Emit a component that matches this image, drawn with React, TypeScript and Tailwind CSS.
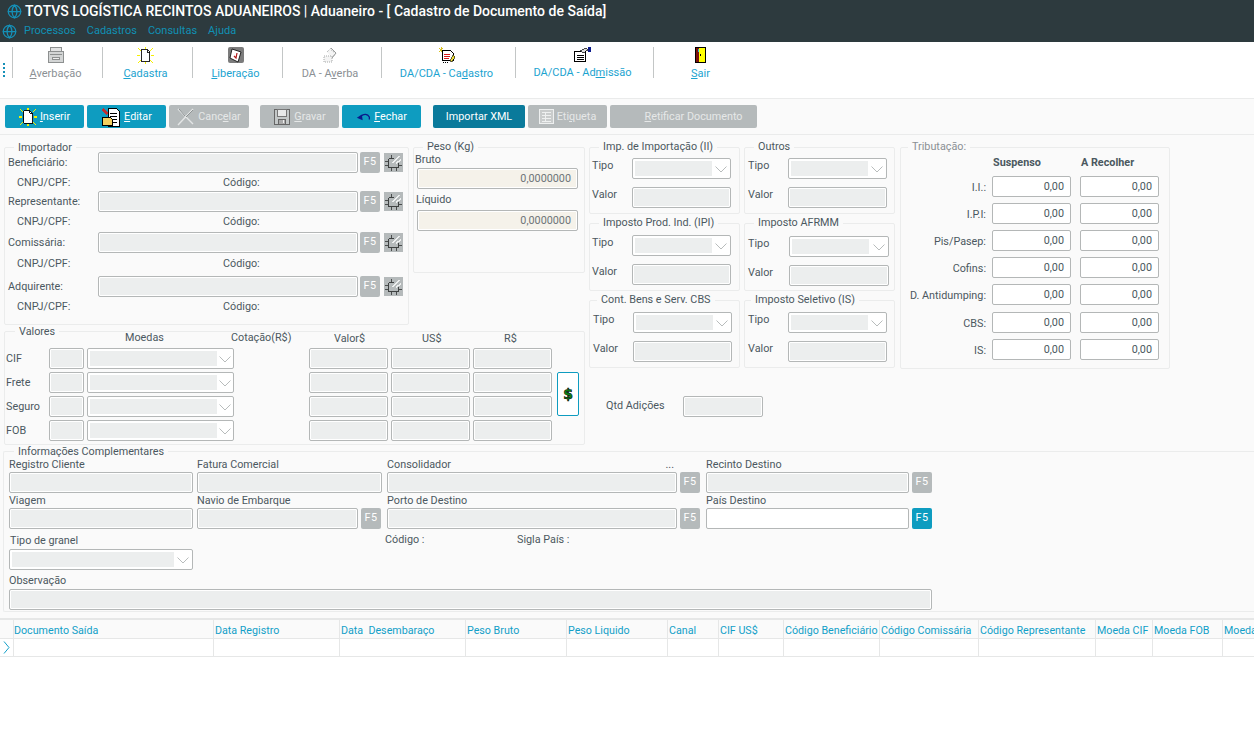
import type { ReactNode } from "react";
import { Globe } from "lucide-react";

function SparkPage({ size = 20 }: { size?: number }) {
  return (
    <svg width={size} height={size} viewBox="0 0 20 20" shapeRendering="crispEdges">
      <path d="M1 1l4 4M19 1l-4 4M1 19l4-4M19 19l-4-4M0 10h3M17 10h3M10 0v2M10 18v2" stroke="#f6f000" strokeWidth="1.5" fill="none" />
      <path d="M5 3h7l3 3v11H5z" fill="#fff" stroke="#000" />
      <path d="M12 3v3h3" fill="none" stroke="#000" />
    </svg>
  );
}

function EditIcon() {
  return (
    <svg width="20" height="20" viewBox="0 0 20 20" shapeRendering="crispEdges">
      <path d="M7 1h8l3 3v15H7z" fill="#fff" stroke="#000" />
      <path d="M9 6h7M9 9h7M10 12h6M10 15h6" stroke="#000" />
      <path d="M1 10h8l2 2v6H1z" fill="#f2d060" stroke="#000" />
      <path d="M2 1l5 5-2 2-5-5z" fill="#c03030" />
    </svg>
  );
}

function CrossIcon() {
  return (
    <svg width="18" height="18" viewBox="0 0 18 18">
      <path d="M1 1l15 15M16 1L1 17" stroke="#e4e6e6" strokeWidth="1.4" fill="none" />
      <path d="M2 1l6 7M16 2l-7 7" stroke="#8d9293" strokeWidth="1" fill="none" />
    </svg>
  );
}

function FloppyIcon() {
  return (
    <svg width="18" height="18" viewBox="0 0 18 18" shapeRendering="crispEdges">
      <path d="M1.500 1.500h15v15h-15z" fill="#c4c8c8" stroke="#666" />
      <path d="M4.500 1.500h9v7h-9z" fill="#e8e9e9" stroke="#777" />
      <path d="M5.500 11.500h7v5h-7z" fill="#aaa" stroke="#666" />
      <path d="M10 12v3" stroke="#eee" />
    </svg>
  );
}

function UndoIcon() {
  return (
    <svg width="15" height="10" viewBox="0 0 18 12">
      <path d="M6 5c3-3 8-3 10 1v3" stroke="#0a1a8c" strokeWidth="1.500" fill="none" />
      <path d="M1 7l7 3-1-7z" fill="#0a1a8c" />
    </svg>
  );
}

function GridIcon() {
  return (
    <svg width="15" height="15" viewBox="0 0 15 15" shapeRendering="crispEdges">
      <path d="M.5.5h14v14H.5z" fill="#c9cccc" stroke="#eef0f0" />
      <path d="M3 3h9M3 6h9M3 9h9M3 12h9M6 3v9" stroke="#eef0f0" />
    </svg>
  );
}

function ChipIcon() {
  return (
    <div className="w-[19px] h-[19px] bg-[#b5babb] flex items-center justify-center shrink-0">
      <svg width="17" height="17" viewBox="0 0 17 17" shapeRendering="crispEdges">
        <path d="M3.500 4.500v9h10v-5M3.500 4.500h5" fill="none" stroke="#3f4242" />
        <path d="M0 7h3M0 11h3M14 11h3M6 1v3M6 14v3M11 14v3" stroke="#4a4d4d" />
        <path d="M8 9l6-7M11 9l5-3" stroke="#eef0f0" strokeWidth="1.500" />
      </svg>
    </div>
  );
}

function Chevron() {
  return (
    <svg width="12" height="7" viewBox="0 0 12 7" className="shrink-0">
      <path d="M.5.5L6 6 11.500.5" stroke="#b8bcbc" fill="none" />
    </svg>
  );
}

function ToolAverbacao() {
  return (
    <svg width="18" height="18" viewBox="0 0 18 18" shapeRendering="crispEdges">
      <path d="M3.500 1.500h11v4h-11z" fill="#e2e3e3" stroke="#8d9090" />
      <path d="M1.500 5.500h15v11h-15z" fill="#d3d5d5" stroke="#8d9090" />
      <path d="M3 8.500h12M5.500 11.500h7v2h-7z" fill="#eee" stroke="#8d9090" />
    </svg>
  );
}

function ToolLiberacao() {
  return (
    <svg width="16" height="16" viewBox="0 0 16 16">
      <rect width="16" height="16" rx="2" fill="#7c7c7c" />
      <path d="M4 2l9 3-3 10-8-4z" fill="#fff" stroke="#000" strokeWidth=".8" />
      <path d="M6 9l2 2 1-5" stroke="#b01818" strokeWidth="1.200" fill="none" />
    </svg>
  );
}

function ToolAverba() {
  return (
    <svg width="14" height="16" viewBox="0 0 14 16">
      <path d="M1 9h8v6H1zM4 5l4-4 1 3 4 2-4 5" fill="#f4f4f4" stroke="#a6a9a9" strokeDasharray="1 1" />
      <path d="M8 1l5 5-4 5" fill="none" stroke="#9a9d9d" />
    </svg>
  );
}

function ToolDaCadastro() {
  return (
    <svg width="18" height="17" viewBox="0 0 18 17" shapeRendering="crispEdges">
      <path d="M1 1l3 3M5 1L1 5M3 0v5" stroke="#d8c020" />
      <path d="M4.500 3.500h8l3 3v7h-11z" fill="#fff" stroke="#000" />
      <path d="M6 7h6M6 9h6M6 11h5" stroke="#d81818" />
      <path d="M15 8l2 2-3 5-2-1z" fill="#f0e040" stroke="#000" strokeWidth=".6" />
      <path d="M5 15h6" stroke="#000" strokeDasharray="1 1" />
    </svg>
  );
}

function ToolDaAdmissao() {
  return (
    <svg width="17" height="15" viewBox="0 0 17 15" shapeRendering="crispEdges">
      <path d="M.5 4.500h11v10H.500z" fill="#fff" stroke="#000" />
      <path d="M3 8h7M3 10h7M3 12h7" stroke="#000" />
      <path d="M6 4l6-3 2 2-5 3z" fill="#ddd" stroke="#000" strokeWidth=".7" />
      <path d="M14 0h3v5h-3z" fill="#0c1c8c" />
    </svg>
  );
}

function ToolSair() {
  return (
    <svg width="11" height="16" viewBox="0 0 11 16" shapeRendering="crispEdges">
      <path d="M0 0h11v16H0z" fill="#000" />
      <path d="M1 1h3v14H1z" fill="#7c1010" />
      <path d="M4 1h6v14H4z" fill="#ffff00" />
      <path d="M3 2l1 0v3H3z" fill="#20c0d0" />
      <path d="M5 7h1v2H5z" fill="#000" />
    </svg>
  );
}

function ToolItem({ width, label, icon, disabled }: { width: string; label: ReactNode; icon: ReactNode; disabled?: boolean }) {
  return (
    <div className={`h-[31px] border-l border-[#c3c6c6] flex flex-col items-center pr-[4px] shrink-0 ${width}`}>
      <div className="h-[16px] flex items-center justify-center">{icon}</div>
      <div className={`mt-[3px] h-[14px] leading-[16px] text-[11px] whitespace-nowrap ${disabled ? "text-[#8b9094]" : "text-[#1ba3d0]"}`}>{label}</div>
    </div>
  );
}

function ActionButton({ width, icon, children, disabled, dark, ml }: { width: string; icon?: ReactNode; children: ReactNode; disabled?: boolean; dark?: boolean; ml?: string }) {
  const bg = disabled ? "bg-[#b5babb] text-[#e6e8e8]" : dark ? "bg-[#0a7a9b] text-white" : "bg-[#0e9cc0] text-white";
  return (
    <div className={`h-[23px] rounded-[2px] flex items-center justify-center gap-[3px] shrink-0 ${bg} ${width} ${ml ?? ""}`}>
      {icon}
      <span className="whitespace-nowrap pt-[2px]">{children}</span>
    </div>
  );
}

function Group({ title, className, legend, raised, children }: { title: string; className?: string; legend?: string; raised?: boolean; children?: ReactNode }) {
  return (
    <div className={`relative border border-[#ebecec] rounded-[2px] shrink-0 ${className ?? ""}`}>
      <span className={`absolute h-[14px] leading-[14px] px-[4px] bg-[#fafafa] whitespace-nowrap ${raised ? "-top-[8px]" : "-top-[7px]"} ${legend ?? "left-[9px]"}`}>{title}</span>
      {children}
    </div>
  );
}

function Input({ width, value, tone = "off", className }: { width: string; value?: string; tone?: "off" | "sand" | "on"; className?: string }) {
  const bg = tone === "sand" ? "bg-[#f5f2ea] text-[#6e7478]" : tone === "on" ? "bg-white text-[#4b5860]" : "bg-[#eceeee]";
  return (
    <div className={`h-[21px] leading-[20px] border border-[#b4b7b7] rounded-[2px] text-right pr-[6px] shadow-[inset_0_0_0_1px_#fff] shrink-0 ${bg} ${width} ${className ?? ""}`}>
      {value}
    </div>
  );
}

function Select({ width, inner, className }: { width: string; inner: string; className?: string }) {
  return (
    <div className={`h-[21px] border border-[#b4b7b7] rounded-[2px] bg-white flex items-center pl-[2px] shrink-0 ${width} ${className ?? ""}`}>
      <div className={`h-[15px] bg-[#eceeee] ${inner}`} />
      <div className="flex-1 flex justify-center pt-[1px]">
        <Chevron />
      </div>
    </div>
  );
}

function F5({ active, className }: { active?: boolean; className?: string }) {
  return (
    <div className={`w-[20px] h-[21px] rounded-[2px] flex items-center justify-center text-white tracking-[0.5px] shrink-0 ${active ? "bg-[#0e9cc0]" : "bg-[#b5babb]"} ${className ?? ""}`}>
      F5
    </div>
  );
}

function PartyRow({ label, gap, top }: { label: string; gap: string; top?: string }) {
  return (
    <>
      <div className={`flex items-center pl-[3px] ${top ?? ""}`}>
        <span className="w-[90px] pt-[1px]">{label}</span>
        <Input width="w-[260px]" />
        <F5 className="ml-[2px]" />
        <div className="ml-[4px]">
          <ChipIcon />
        </div>
      </div>
      <div className={`flex items-center pl-[12px] ${gap}`}>
        <span className="w-[206px]">CNPJ/CPF:</span>
        <span>Código:</span>
      </div>
    </>
  );
}

function TaxBox({ title, legend, pad, sel, valor, left }: { title: string; legend: string; pad: string; sel?: string; valor?: string; left?: string }) {
  return (
    <Group title={title} legend={legend} className={pad} raised>
      <div className={`flex items-start ${left ?? "pl-[2px]"}`}>
        <span className="w-[40px] h-[15px] leading-[15px]">Tipo</span>
        <Select width={sel ?? "w-[99px]"} inner="w-[77px]" />
      </div>
      <div className={`flex items-start mt-[8px] ${left ?? "pl-[2px]"}`}>
        <span className="w-[40px] h-[15px] leading-[15px]">Valor</span>
        <Input width={valor ?? sel ?? "w-[99px]"} />
      </div>
    </Group>
  );
}

function TribRow({ label, className }: { label: string; className?: string }) {
  return (
    <div className={`flex items-center ${className ?? ""}`}>
      <span className="w-[85px] pt-[4px] text-right whitespace-nowrap">{label}</span>
      <Input width="w-[79px]" className="ml-[6px]" value="0,00" tone="on" />
      <Input width="w-[79px]" className="ml-[9px]" value="0,00" tone="on" />
    </div>
  );
}

function MoneyRow({ label }: { label: string }) {
  return (
    <div className="flex items-center pl-[1px]">
      <span className="w-[43px] pt-[2px]">{label}</span>
      <Input width="w-[35px]" />
      <Select width="w-[147px]" inner="w-[127px]" className="ml-[3px]" />
      <Input width="w-[79px]" className="ml-[75px]" />
      <Input width="w-[79px]" className="ml-[3px]" />
      <Input width="w-[79px]" className="ml-[3px]" />
    </div>
  );
}

function LabeledField({ label, width, children }: { label: ReactNode; width: string; children: ReactNode }) {
  return (
    <div className={`shrink-0 ${width}`}>
      <div className="h-[15px] leading-[15px] flex justify-between whitespace-nowrap">{label}</div>
      {children}
    </div>
  );
}

const gridColumns = [
  { w: "w-[200px] pl-0", t: "Documento Saída" },
  { w: "w-[126px] pl-[1px]", t: "Data Registro" },
  { w: "w-[126px] pl-[1px]", t: "Data  Desembaraço" },
  { w: "w-[101px] pl-[1px]", t: "Peso Bruto" },
  { w: "w-[101px] pl-[1px]", t: "Peso Liquido" },
  { w: "w-[51px] pl-[1px]", t: "Canal" },
  { w: "w-[65px] pl-[1px]", t: "CIF US$" },
  { w: "w-[96px] pl-[1px]", t: "Código Beneficiário" },
  { w: "w-[99px] pl-[1px]", t: "Código Comissária" },
  { w: "w-[117px] pl-[1px]", t: "Código Representante" },
  { w: "w-[57px] pl-[1px]", t: "Moeda CIF" },
  { w: "w-[70px] pl-[1px]", t: "Moeda FOB" },
  { w: "w-[60px] pl-[1px]", t: "Moeda" },
];

export default function App() {
  return (
    <div className="w-[1254px] h-[742px] overflow-hidden bg-white font-['Roboto',sans-serif] text-[10.8px] text-[#4b5860]">
      <header className="h-[42px] bg-[#2d3a3e]">
        <div className="h-[21px] flex items-center pl-[7px] pt-[1px]">
          <Globe size={15} className="text-[#1590b8]" />
          <span className="ml-[3px] text-[14px] font-medium text-white whitespace-nowrap">TOTVS LOGÍSTICA RECINTOS ADUANEIROS | Aduaneiro - [ Cadastro de Documento de Saída]</span>
        </div>
        <div className="h-[21px] flex items-center pl-[2px] text-[11px] text-[#1090b4]">
          <Globe size={15} className="text-[#1590b8]" />
          <span className="ml-[7px]">Processos</span>
          <span className="ml-[11px]">Cadastros</span>
          <span className="ml-[11px]">Consultas</span>
          <span className="ml-[11px]">Ajuda</span>
        </div>
      </header>

      <div className="h-[57px] bg-white border-b border-[#eaebeb] flex items-start pt-[5px]">
        <div className="w-[2px] h-[14px] mt-[16px] ml-[3px] mr-[7px] border-l-2 border-dotted border-[#1590b8]" />
        <ToolItem width="w-[90px]" disabled icon={<ToolAverbacao />} label={<><u>A</u>verbação</>} />
        <ToolItem width="w-[90px]" icon={<SparkPage size={17} />} label={<><u>C</u>adastra</>} />
        <ToolItem width="w-[90px]" icon={<ToolLiberacao />} label={<><u>L</u>iberação</>} />
        <ToolItem width="w-[99px]" disabled icon={<ToolAverba />} label={<>DA - A<u>v</u>erba</>} />
        <ToolItem width="w-[134px]" icon={<ToolDaCadastro />} label={<>DA/CDA - Ca<u>d</u>astro</>} />
        <ToolItem width="w-[138px]" icon={<ToolDaAdmissao />} label={<>DA/CDA - Ad<u>m</u>issão</>} />
        <ToolItem width="w-[98px]" icon={<ToolSair />} label={<><u>S</u>air</>} />
      </div>

      <div className="bg-[#fafafa] h-[701px]">
        <div className="h-[36px] border-b border-[#eaebeb] flex items-start pt-[6px] pl-[5px]">
          <ActionButton width="w-[79px]" icon={<SparkPage size={18} />}><u>I</u>nserir</ActionButton>
          <ActionButton width="w-[79px]" ml="ml-[3px]" icon={<EditIcon />}><u>E</u>ditar</ActionButton>
          <ActionButton width="w-[80px]" ml="ml-[3px]" disabled icon={<CrossIcon />}>Canc<u>e</u>lar</ActionButton>
          <ActionButton width="w-[79px]" ml="ml-[11px]" disabled icon={<FloppyIcon />}><u>G</u>ravar</ActionButton>
          <ActionButton width="w-[79px]" ml="ml-[3px]" icon={<UndoIcon />}><u>F</u>echar</ActionButton>
          <ActionButton width="w-[92px]" ml="ml-[12px]" dark>Importar XML</ActionButton>
          <ActionButton width="w-[79px]" ml="ml-[3px]" disabled icon={<GridIcon />}>Eti<u>q</u>ueta</ActionButton>
          <ActionButton width="w-[147px]" ml="ml-[3px]" disabled><span className="ml-[20px]"><u>R</u>etificar Documento</span></ActionButton>
        </div>

        <div className="flex items-start pl-[4px] pt-[12px]">
          <div className="w-[581px] shrink-0">
            <div className="flex items-start">
              <Group title="Importador" className="w-[405px] h-[178px] pt-[4px]">
                <PartyRow label="Beneficiário:" gap="h-[18px] pt-[2px]" />
                <PartyRow label="Representante:" gap="h-[20px] pt-[1px]" />
                <PartyRow label="Comissária:" gap="h-[23px]" />
                <PartyRow label="Adquirente:" gap="h-[20px] pt-[1px]" />
              </Group>
              <Group title="Peso (Kg)" className="w-[172px] h-[126px] ml-[4px] pl-[1px] pt-[3px]" raised>
                <div className="h-[15px] leading-[17px]">Bruto</div>
                <Input width="w-[161px]" tone="sand" className="ml-[2px] mt-[2px]" value="0,0000000" />
                <div className="h-[15px] leading-[17px] mt-[2px] ml-[1px]">Líquido</div>
                <Input width="w-[161px]" tone="sand" className="ml-[2px] mt-[4px]" value="0,0000000" />
              </Group>
            </div>

            <Group title="Valores" className="w-[581px] h-[114px] mt-[6px]" legend="left-[10px]">
              <div className="h-[16px] leading-[12px] flex items-start whitespace-nowrap">
                <span className="ml-[120px] w-[106px]">Moedas</span>
                <span className="w-[103px]">Cotação(R$)</span>
                <span className="w-[88px] pt-[1px]">Valor$</span>
                <span className="w-[82px] pt-[1px]">US$</span>
                <span className="pt-[1px]">R$</span>
              </div>
              <div className="flex items-start">
                <div className="flex flex-col gap-[3px]">
                  <MoneyRow label="CIF" />
                  <MoneyRow label="Frete" />
                  <MoneyRow label="Seguro" />
                  <MoneyRow label="FOB" />
                </div>
                <div className="ml-[5px] mt-[24px] w-[22px] h-[44px] border border-[#0e9cc0] rounded-[2px] bg-white flex items-center justify-center font-['DejaVu_Sans',sans-serif] text-[14px] font-bold text-[#0a8a14] [-webkit-text-stroke:0.6px_black]">
                  $
                </div>
              </div>
            </Group>
          </div>

          <div className="w-[307px] ml-[4px] shrink-0">
            <div className="grid grid-cols-[151px_151px] grid-rows-[67px_68px_68px] gap-x-[4px] gap-y-[9px]">
              <TaxBox title="Imp. de Importação (II)" legend="left-[9px]" pad="pt-[10px]" />
              <TaxBox title="Outros" legend="left-[9px]" pad="pt-[10px]" left="pl-[3px]" />
              <TaxBox title="Imposto Prod. Ind. (IPI)" legend="left-[9px]" pad="pt-[11px]" />
              <TaxBox title="Imposto AFRMM" legend="left-[9px]" pad="pt-[12px]" sel="w-[100px] ml-[1px]" left="pl-[3px]" />
              <TaxBox title="Cont. Bens e Serv. CBS" legend="left-[7px]" pad="pt-[11px]" left="pl-[3px]" />
              <TaxBox title="Imposto Seletivo (IS)" legend="left-[6px]" pad="pt-[11px]" left="pl-[3px]" />
            </div>
            <div className="flex items-center mt-[28px] pl-[17px]">
              <span className="w-[77px]">Qtd Adições</span>
              <Input width="w-[80px]" />
            </div>
          </div>

          <Group title="Tributação:" className="w-[270px] h-[222px] ml-[4px] pt-[7px]" legend="left-[7px] text-[#8b9094]" raised>
            <div className="flex h-[15px] leading-[15px] font-bold pl-[92px]">
              <span className="w-[88px]">Suspenso</span>
              <span>A Recolher</span>
            </div>
            <div className="flex flex-col gap-[6px] mt-[6px]">
              <TribRow label="I.I.:" />
              <TribRow label="I.P.I:" />
              <TribRow label="Pis/Pasep:" />
              <TribRow label="Cofins:" />
              <TribRow label="D. Antidumping:" />
              <TribRow label="CBS:" className="mt-[1px]" />
              <TribRow label="IS:" />
            </div>
          </Group>
        </div>

        <div className="relative h-[161px] mt-[6px] ml-[3px] border-t border-l border-b border-[#ebecec] rounded-l-[2px] pl-[5px] pt-[5px]">
          <span className="absolute -top-[7px] left-[10px] h-[14px] leading-[14px] px-[4px] bg-[#fafafa]">Informações Complementares</span>
          <div className="flex items-start">
            <LabeledField label="Registro Cliente" width="w-[184px]"><Input width="w-[184px]" /></LabeledField>
            <LabeledField label="Fatura Comercial" width="w-[185px] ml-[4px]"><Input width="w-[185px]" /></LabeledField>
            <LabeledField label={<><span>Consolidador</span><span className="pr-[3px]">...</span></>} width="w-[290px] ml-[5px]"><Input width="w-[290px]" /></LabeledField>
            <F5 className="ml-[3px] mt-[15px]" />
            <LabeledField label="Recinto Destino" width="w-[203px] ml-[6px]"><Input width="w-[203px]" /></LabeledField>
            <F5 className="ml-[3px] mt-[15px]" />
          </div>
          <div className="flex items-start">
            <LabeledField label="Viagem" width="w-[184px]"><Input width="w-[184px]" /></LabeledField>
            <LabeledField label="Navio de Embarque" width="w-[161px] ml-[4px]"><Input width="w-[161px]" /></LabeledField>
            <F5 className="ml-[3px] mt-[15px]" />
            <LabeledField label="Porto de Destino" width="w-[290px] ml-[6px]"><Input width="w-[290px]" /></LabeledField>
            <F5 className="ml-[3px] mt-[15px]" />
            <LabeledField label="País Destino" width="w-[203px] ml-[6px]"><Input width="w-[203px]" tone="on" /></LabeledField>
            <F5 active className="ml-[3px] mt-[15px]" />
          </div>
          <div className="flex items-start mt-[4px]">
            <div className="w-[184px] shrink-0">
              <div className="h-[15px] leading-[15px] pl-[1px]">Tipo de granel</div>
              <Select width="w-[184px]" inner="w-[162px]" className="mt-[1px]" />
            </div>
            <span className="ml-[192px] w-[132px] h-[14px] leading-[14px]">Código :</span>
            <span className="h-[14px] leading-[14px]">Sigla País :</span>
          </div>
          <div className="mt-[2px] h-[15px] leading-[17px]">Observação</div>
          <Input width="w-[923px]" className="mt-[2px]" />
        </div>

        <div className="mt-[6px] border-t-2 border-[#e6e7e7]">
          <div className="h-[19px] border-b border-[#e6e7e7] flex text-[10.7px] text-[#129fc8]">
            <div className="w-[14px] shrink-0 border-r border-[#e6e7e7]" />
            {gridColumns.map((col) => (
              <div key={col.t} className={`${col.w} shrink-0 border-r border-[#e6e7e7] leading-[22px] whitespace-pre`}>{col.t}</div>
            ))}
          </div>
          <div className="h-[18px] border-b border-[#e6e7e7] flex bg-white">
            <div className="w-[14px] shrink-0 border-r border-[#e6e7e7] flex items-center pl-[3px]">
              <svg width="7" height="13" viewBox="0 0 7 13"><path d="M1 .5L6 6.500 1 12.500" stroke="#129fc8" fill="none" /></svg>
            </div>
            {gridColumns.map((col) => (
              <div key={col.t} className={`${col.w} shrink-0 border-r border-[#e6e7e7]`} />
            ))}
          </div>
          <div className="h-[100px] bg-white" />
        </div>
      </div>
    </div>
  );
}
